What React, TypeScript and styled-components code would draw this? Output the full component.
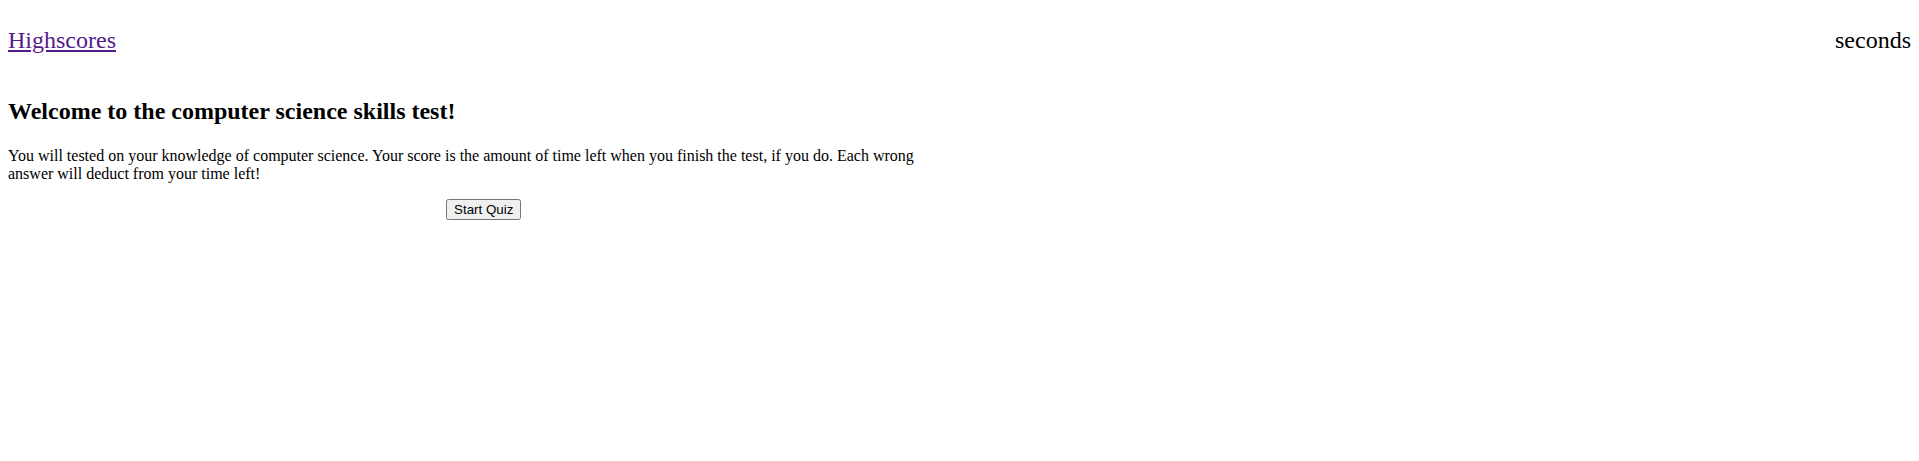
import styled, { createGlobalStyle } from "styled-components";

const Global = createGlobalStyle`
  body {
    margin: 8px;
    font-family: "Liberation Serif", "Times New Roman", serif;
    background: #fff;
    color: #000;
  }
`;

const Header = styled.header`
  display: flex;
  justify-content: space-between;
  align-items: center;
  font-size: 24px;
  margin: 19px 0 0;
`;

const HighscoresLink = styled.a`
  color: #551a8b;
  text-decoration: underline;
`;

const Timer = styled.span``;

const Intro = styled.section`
  width: 50%;
`;

const Title = styled.h2`
  font-size: 24px;
  font-weight: bold;
  margin: 44px 0 22px;
`;

const Text = styled.p`
  font-size: 16px;
  margin: 16px 0;
`;

const ButtonRow = styled.div`
  display: flex;
  justify-content: center;
`;

const StartButton = styled.button`
  font-family: "Liberation Sans", Arial, sans-serif;
  font-size: 13.33px;
`;

export default function App() {
  return (
    <>
      <Global />
      <Header>
        <HighscoresLink href="#">Highscores</HighscoresLink>
        <Timer>seconds</Timer>
      </Header>
      <Intro>
        <Title>Welcome to the computer science skills test!</Title>
        <Text>
          You will tested on your knowledge of computer science. Your score is the amount of time left when you
          finish the test, if you do. Each wrong answer will deduct from your time left!
        </Text>
        <ButtonRow>
          <StartButton>Start Quiz</StartButton>
        </ButtonRow>
      </Intro>
    </>
  );
}
